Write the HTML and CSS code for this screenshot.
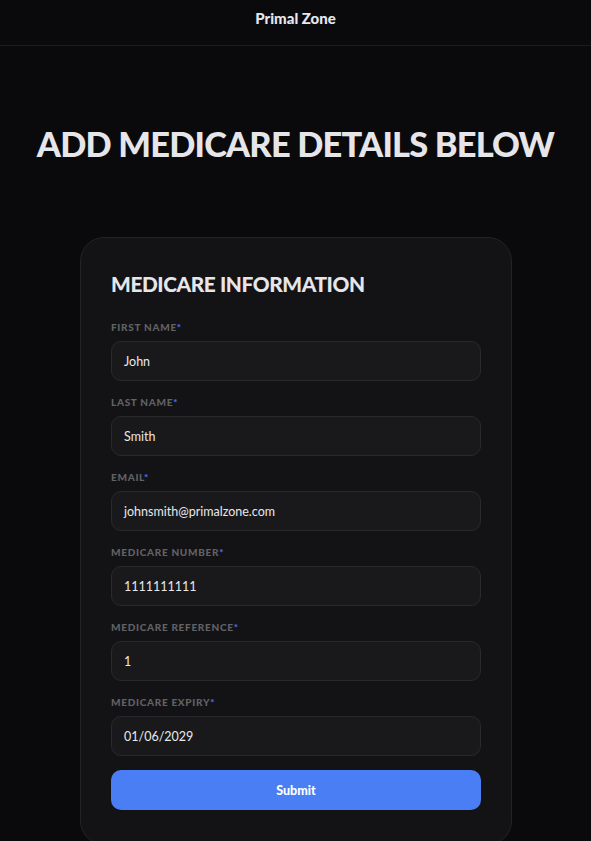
FILE: index.html
```html
<!DOCTYPE html>
<html>
<head>
<meta charset="utf-8">
<link rel="stylesheet" href="styles.css">
</head>
<body>
<header class="topbar">Primal Zone</header>
<main class="page">
  <h1 class="title">ADD MEDICARE DETAILS BELOW</h1>
  <section class="card">
    <h2 class="card-title">MEDICARE INFORMATION</h2>
    <form class="form">
      <div class="field">
        <label class="label">FIRST NAME<span class="req">*</span></label>
        <div class="input">John</div>
      </div>
      <div class="field">
        <label class="label">LAST NAME<span class="req">*</span></label>
        <div class="input">Smith</div>
      </div>
      <div class="field">
        <label class="label">EMAIL<span class="req">*</span></label>
        <div class="input">johnsmith@primalzone.com</div>
      </div>
      <div class="field">
        <label class="label">MEDICARE NUMBER<span class="req">*</span></label>
        <div class="input">1111111111</div>
      </div>
      <div class="field">
        <label class="label">MEDICARE REFERENCE<span class="req">*</span></label>
        <div class="input">1</div>
      </div>
      <div class="field">
        <label class="label">MEDICARE EXPIRY<span class="req">*</span></label>
        <div class="input">01/06/2029</div>
      </div>
      <button type="button" class="submit">Submit</button>
    </form>
  </section>
</main>
</body>
</html>
```
FILE: styles.css
```css
* { box-sizing: border-box; }
html, body {
  margin: 0;
  padding: 0;
  background: #0a0a0c;
  color: #e8e8ea;
  font-family: "Lato", "Noto Sans", sans-serif;
}
.topbar {
  height: 46px;
  border-bottom: 1px solid #1c1c1f;
  text-align: center;
  font-weight: 900;
  font-size: 15px;
  line-height: 36px;
  color: #e4e8ee;
}
.page {
  display: flex;
  flex-direction: column;
  align-items: center;
  padding-top: 76px;
}
.title {
  margin: 0;
  font-size: 34.4px;
  line-height: 44px;
  font-weight: 900;
  letter-spacing: -0.8px;
  color: #e6e6ea;
}
.card {
  margin-top: 71px;
  width: 432px;
  margin-left: 1px;
  background: #131315;
  border: 1px solid #232326;
  border-radius: 24px;
  padding: 32px 30px 34px 30px;
}
.card-title {
  margin: 0;
  font-size: 20.8px;
  line-height: 28px;
  font-weight: 900;
  letter-spacing: -0.4px;
  color: #e6e6ea;
}
.form {
  margin-top: 23px;
  display: flex;
  flex-direction: column;
}
.field {
  display: flex;
  flex-direction: column;
  margin-bottom: 15px;
}
.label {
  font-size: 10px;
  line-height: 12px;
  font-weight: 900;
  letter-spacing: 0.7px;
  color: #626265;
  margin-bottom: 8px;
}
.req { color: #4a6cf0; }
.input {
  height: 40px;
  background: #19191b;
  border: 1px solid #2a2a2d;
  border-radius: 10px;
  padding: 0 12px;
  display: flex;
  align-items: center;
  font-size: 12.5px;
  color: #e8e8ea;
}
.submit {
  margin-top: -1px;
  height: 40px;
  border: 0;
  border-radius: 10px;
  background: #4a7ef4;
  color: #ffffff;
  font-family: "Lato", sans-serif;
  font-weight: 900;
  font-size: 12.5px;
}
```
